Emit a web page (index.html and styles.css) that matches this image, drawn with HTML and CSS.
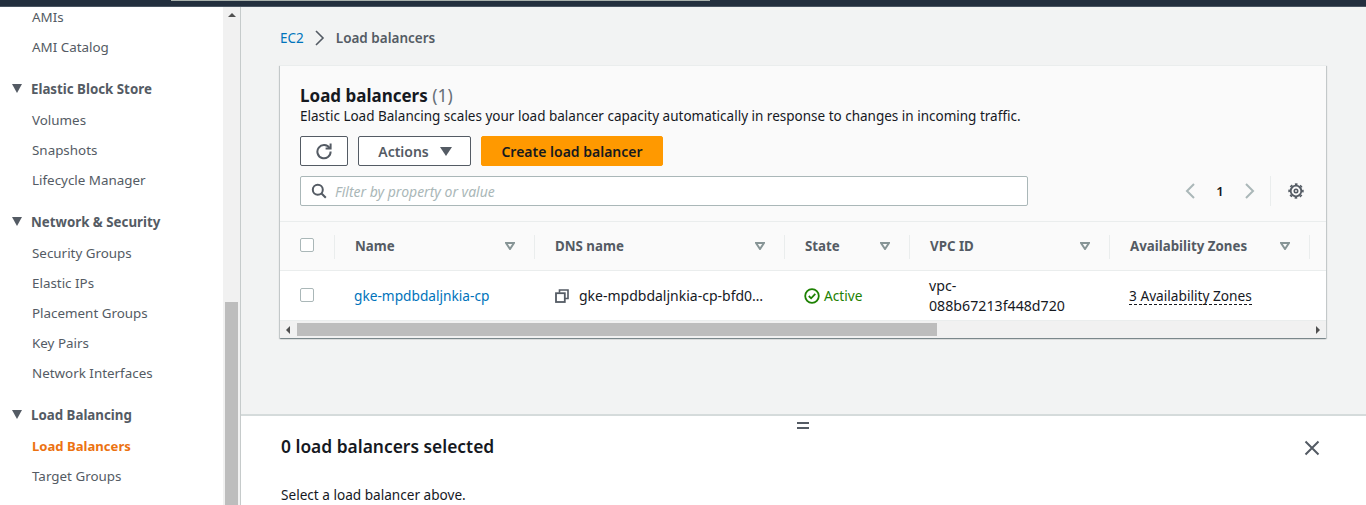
FILE: index.html
```html
<!DOCTYPE html>
<html lang="en">
<head>
<meta charset="utf-8">
<title>Load balancers | EC2</title>
<link rel="stylesheet" href="styles.css">
</head>
<body>
<div class="topbar"><div class="topbar-strip"></div></div>
<div class="shell">
  <nav class="sidebar">
    <ul class="nav-list">
      <li class="nav-item">AMIs</li>
      <li class="nav-item">AMI Catalog</li>
      <li class="nav-head"><span class="tri"></span>Elastic Block Store</li>
      <li class="nav-item">Volumes</li>
      <li class="nav-item">Snapshots</li>
      <li class="nav-item">Lifecycle Manager</li>
      <li class="nav-head"><span class="tri"></span>Network &amp; Security</li>
      <li class="nav-item">Security Groups</li>
      <li class="nav-item">Elastic IPs</li>
      <li class="nav-item">Placement Groups</li>
      <li class="nav-item">Key Pairs</li>
      <li class="nav-item">Network Interfaces</li>
      <li class="nav-head"><span class="tri"></span>Load Balancing</li>
      <li class="nav-item nav-active">Load Balancers</li>
      <li class="nav-item">Target Groups</li>
    </ul>
  </nav>
  <div class="side-scroll">
    <div class="side-arrow"></div>
    <div class="side-thumb"></div>
  </div>
  <main class="main">
    <div class="content">
      <div class="crumbs">
        <a class="crumb-link">EC2</a>
        <svg class="crumb-sep" width="12" height="16" viewBox="0 0 12 16"><path d="M2 1l7 7-7 7" fill="none" stroke="#545b64" stroke-width="1.600"/></svg>
        <span class="crumb-cur">Load balancers</span>
      </div>
      <section class="card">
        <header class="card-head">
          <h1 class="title">Load balancers <span class="count">(1)</span></h1>
          <p class="desc">Elastic Load Balancing scales your load balancer capacity automatically in response to changes in incoming traffic.</p>
          <div class="actions">
            <button class="btn btn-icon">
              <svg width="18" height="18" viewBox="0 0 18 18"><path d="M14.600 6.200A6.600 6.600 0 1 0 15.600 9.500" fill="none" stroke="#545b64" stroke-width="2"/><path d="M15.600 1.500v5h-5" fill="none" stroke="#545b64" stroke-width="2"/></svg>
            </button>
            <button class="btn btn-actions">Actions<span class="btn-tri"></span></button>
            <button class="btn btn-primary">Create load balancer</button>
          </div>
          <div class="filter-row">
            <div class="filter">
              <svg width="16" height="16" viewBox="0 0 16 16"><circle cx="6.800" cy="6.800" r="5" fill="none" stroke="#545b64" stroke-width="2"/><path d="M10.500 10.500l4.300 4.300" stroke="#545b64" stroke-width="2"/></svg>
              <span class="placeholder">Filter by property or value</span>
            </div>
            <div class="pager">
              <svg width="12" height="16" viewBox="0 0 12 16"><path d="M10 1L3 8l7 7" fill="none" stroke="#aab7b8" stroke-width="2"/></svg>
              <span class="page-num">1</span>
              <svg width="12" height="16" viewBox="0 0 12 16"><path d="M2 1l7 7-7 7" fill="none" stroke="#aab7b8" stroke-width="2"/></svg>
              <span class="pager-sep"></span>
              <svg class="gear" width="16" height="16" viewBox="0 0 16 16"><circle cx="8" cy="8" r="5.300" fill="none" stroke="#545b64" stroke-width="1.800"/><circle cx="8" cy="8" r="6.900" fill="none" stroke="#545b64" stroke-width="1.600" stroke-dasharray="2.700 2.720" stroke-dashoffset="1.350"/><circle cx="8" cy="8" r="1.700" fill="none" stroke="#545b64" stroke-width="1.600"/></svg>
            </div>
          </div>
        </header>
        <div class="table">
          <div class="row row-head">
            <div class="cell cell-check"><span class="check"></span></div>
            <div class="cell th"><span>Name</span><svg class="sort" width="10" height="8" viewBox="0 0 10 8"><path d="M1 1h8L5 7z" fill="#fafafa" stroke="#879596" stroke-width="2"/></svg></div>
            <div class="cell th"><span>DNS name</span><svg class="sort" width="10" height="8" viewBox="0 0 10 8"><path d="M1 1h8L5 7z" fill="#fafafa" stroke="#879596" stroke-width="2"/></svg></div>
            <div class="cell th"><span>State</span><svg class="sort" width="10" height="8" viewBox="0 0 10 8"><path d="M1 1h8L5 7z" fill="#fafafa" stroke="#879596" stroke-width="2"/></svg></div>
            <div class="cell th"><span>VPC ID</span><svg class="sort" width="10" height="8" viewBox="0 0 10 8"><path d="M1 1h8L5 7z" fill="#fafafa" stroke="#879596" stroke-width="2"/></svg></div>
            <div class="cell th"><span>Availability Zones</span><svg class="sort" width="10" height="8" viewBox="0 0 10 8"><path d="M1 1h8L5 7z" fill="#fafafa" stroke="#879596" stroke-width="2"/></svg></div>
          </div>
          <div class="row row-body">
            <div class="cell cell-check"><span class="check"></span></div>
            <div class="cell td"><a class="link">gke-mpdbdaljnkia-cp</a></div>
            <div class="cell td td-dns">
              <svg width="14" height="14" viewBox="0 0 14 14"><path d="M4.500 3.800V1h8.500v8.500h-3" fill="none" stroke="#545b64" stroke-width="1.600"/><rect x="1" y="4.200" width="8.800" height="8.800" fill="none" stroke="#545b64" stroke-width="1.800"/></svg>
              <span class="dns-text">gke-mpdbdaljnkia-cp-bfd0…</span>
            </div>
            <div class="cell td td-state">
              <svg width="16" height="16" viewBox="0 0 16 16"><circle cx="8" cy="8" r="6.800" fill="none" stroke="#1d8102" stroke-width="1.800"/><path d="M4.800 8l2.300 2.300 4.200-4.400" fill="none" stroke="#1d8102" stroke-width="1.800"/></svg>
              <span class="active">Active</span>
            </div>
            <div class="cell td td-vpc">vpc-<br>088b67213f448d720</div>
            <div class="cell td"><span class="dotted">3 Availability Zones</span></div>
          </div>
          <div class="hscroll">
            <span class="h-arrow h-left"></span>
            <div class="h-track"><div class="h-thumb"></div></div>
            <span class="h-arrow h-right"></span>
          </div>
        </div>
      </section>
    </div>
    <section class="panel">
      <div class="grip"></div>
      <div class="panel-head">
        <h2 class="panel-title">0 load balancers selected</h2>
        <svg class="panel-close" width="16" height="16" viewBox="0 0 16 16"><path d="M1.500 1.500l13 13M14.500 1.500l-13 13" stroke="#545b64" stroke-width="2"/></svg>
      </div>
      <p class="panel-text">Select a load balancer above.</p>
    </section>
  </main>
</div>
</body>
</html>
```
FILE: styles.css
```css
* { box-sizing: border-box; }
html, body { height: 100%; }
body {
  margin: 0;
  height: 505px;
  overflow: hidden;
  display: flex;
  flex-direction: column;
  font-family: "Noto Sans", "Open Sans", sans-serif;
  font-size: 13.5px;
  color: #16191f;
  background: #fff;
}
h1, h2, p, ul { margin: 0; padding: 0; }
ul { list-style: none; }

.topbar { height: 7px; flex: none; background: #232f3e; border-bottom: 1px solid #4a5562; }
.topbar-strip { width: 539px; height: 1px; margin-left: 171px; background: #a9b1ac; }

.shell { flex: 1; display: flex; min-height: 0; }

.sidebar { width: 223px; flex: none; overflow: hidden; background: #fff; }
.nav-list { margin-top: -5px; }
.nav-item { height: 30px; line-height: 30px; padding-left: 32px; color: #545b64; font-size: 13.400px; }
.nav-head { height: 32px; margin-top: 11px; padding-bottom: 1px; display: flex; align-items: center; gap: 9px; padding-left: 12px; color: #545b64; font-weight: 700; font-size: 13.300px; }
.nav-active { color: #ec7211; font-weight: 700; font-size: 13.100px; }
.tri { width: 0; height: 0; border-left: 5.500px solid transparent; border-right: 5.500px solid transparent; border-top: 9px solid #545b64; }

.side-scroll { width: 17px; flex: none; background: #f1f1f1; display: flex; flex-direction: column; align-items: center; justify-content: space-between; padding-top: 6px; }
.side-arrow { width: 0; height: 0; border-left: 4px solid transparent; border-right: 4px solid transparent; border-bottom: 4px solid #505050; }
.side-thumb { width: 13px; height: 203px; background: #bdbdbd; }

.main { flex: 1; min-width: 0; display: flex; flex-direction: column; border-left: 1px solid #c6cbcb; background: #f2f3f3; }
.content { height: 407px; flex: none; padding: 0 40px 0 39px; }

.crumbs { display: flex; align-items: center; height: 58px; padding-top: 4px; }
.crumb-link { color: #0073bb; }
.crumb-sep { margin: 0 10px; }
.crumb-cur { color: #545b64; font-weight: 600; }

.card { background: #fff; box-shadow: 0 1px 1px 0 rgba(0,28,36,.3), 1px 1px 1px 0 rgba(0,28,36,.15), -1px 1px 1px 0 rgba(0,28,36,.15); }
.card-head { height: 157px; background: #fafafa; padding: 18px 20px 0; border-top: 1px solid #eaeded; border-bottom: 1px solid #eaeded; }
.title { font-size: 17px; line-height: 22px; font-weight: 700; color: #16191f; }
.count { font-weight: 400; color: #687078; font-size: 17.500px; }
.desc { line-height: 20px; margin-top: -1px; }

.actions { display: flex; gap: 10px; margin-top: 10px; }
.btn { height: 30px; font: inherit; font-weight: 600; font-size: 14px; border-radius: 2px; display: flex; align-items: center; justify-content: center; padding: 0; }
.btn-icon { width: 48px; background: #fff; border: 1px solid #545b64; }
.btn-actions { width: 113px; gap: 11px; padding-left: 1px; color: #545b64; background: #fff; border: 1px solid #545b64; }
.btn-tri { width: 0; height: 0; border-left: 6px solid transparent; border-right: 6px solid transparent; border-top: 9px solid #545b64; }
.btn-primary { width: 182px; background: #ff9900; border: 1px solid #ff9900; color: #16191f; }

.filter-row { display: flex; align-items: center; margin-top: 10px; }
.filter { width: 728px; height: 30px; display: flex; align-items: center; gap: 8px; padding-left: 10px; background: #fff; border: 1px solid #aab7b8; border-radius: 2px; }
.placeholder { color: #aab7b8; font-style: italic; font-size: 14px; }
.pager { flex: 1; height: 30px; display: flex; align-items: center; padding-left: 156px; }
.page-num { width: 48px; text-align: center; font-size: 13px; font-weight: 600; }
.pager-sep { width: 1px; height: 30px; background: #eaeded; margin: 0 17px 0 14px; }

.table { overflow: hidden; }
.row { display: grid; grid-template-columns: 55px 200px 250px 125px 200px 200px 17px; }
.row-head { height: 49px; background: #fafafa; border-bottom: 1px solid #eaeded; }
.row-body { height: 49px; background: #fff; }
.cell { display: flex; align-items: center; min-width: 0; }
.cell-check { padding: 0 0 2px 20px; }
.check { width: 14px; height: 14px; border: 1px solid #aab7b8; border-radius: 2px; background: #fff; }
.th { position: relative; justify-content: space-between; padding: 0 20px; color: #545b64; font-weight: 700; font-size: 13.300px; }
.th::before { content: ""; position: absolute; left: -1px; top: 13px; height: 24px; width: 1px; background: #eaeded; }
.row-head .cell:nth-child(6)::after { content: ""; position: absolute; right: 0; top: 13px; height: 24px; width: 1px; background: #eaeded; }
.td { padding: 0 20px 0 19px; font-size: 13.700px; }
.td-dns { gap: 10px; padding-left: 20px; }
.td-dns svg { flex: none; }
.dns-text { white-space: nowrap; font-size: 14px; }
.link { color: #0073bb; }
.td-state { gap: 4px; padding-left: 19px; }
.active { color: #1d8102; }
.td-vpc { display: block; align-self: center; line-height: 20px; font-size: 14.200px; }
.dotted { border-bottom: 1px dashed #16191f; line-height: 17px; }

.hscroll { height: 18px; display: flex; align-items: center; background: #f1f1f1; border-top: 1px solid #eaeded; }
.h-arrow { width: 0; height: 0; flex: none; border-top: 4px solid transparent; border-bottom: 4px solid transparent; }
.h-left { border-right: 4px solid #505050; margin: 0 7px 0 6px; }
.h-right { border-left: 4px solid #505050; margin: 0 6px 0 6px; }
.h-track { flex: 1; height: 13px; }
.h-thumb { width: 640px; height: 13px; background: #bdbdbd; }

.panel { position: relative; flex: 1; background: #fff; border-top: 2px solid #d5dbdb; padding: 0 39px 0 40px; }
.grip { position: absolute; left: 556px; top: 6px; width: 12px; height: 7px; border-top: 2px solid #545b64; border-bottom: 2px solid #545b64; }
.panel-head { display: flex; align-items: center; justify-content: space-between; padding: 17px 7px 0 0; height: 42px; }
.panel-close { margin-top: 4px; }
.panel-title { font-size: 17.400px; font-weight: 600; color: #16191f; }
.panel-text { margin-top: 27px; font-size: 13.600px; }
```
